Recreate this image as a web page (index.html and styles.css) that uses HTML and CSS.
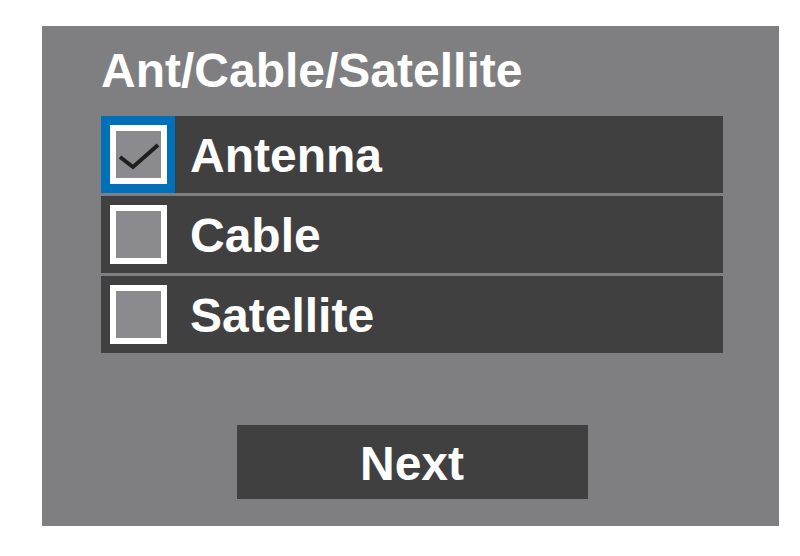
FILE: index.html
```html
<!DOCTYPE html>
<html lang="en">
<head>
  <meta charset="UTF-8">
  <meta name="viewport" content="width=device-width, initial-scale=1.0">
  <title>Ant/Cable/Satellite</title>
  <link rel="stylesheet" href="styles.css">
</head>
<body>
  <div class="setup-panel">
    <h2 class="setup-title">Ant/Cable/Satellite</h2>

    <div class="option-list">
      <div class="option-row">
        <div class="check-cell selected">
          <div class="check-box">
            <svg class="check-mark" width="45" height="47" viewBox="0 0 45 47">
              <path d="M4 26 L17 36 L42 14" fill="none" stroke="#1e1e1e" stroke-width="4"/>
            </svg>
          </div>
        </div>
        <span class="option-label">Antenna</span>
      </div>
      <div class="option-row">
        <div class="check-cell">
          <div class="check-box"></div>
        </div>
        <span class="option-label">Cable</span>
      </div>
      <div class="option-row">
        <div class="check-cell">
          <div class="check-box"></div>
        </div>
        <span class="option-label">Satellite</span>
      </div>
    </div>

    <button type="button" class="next-btn">Next</button>
  </div>
</body>
</html>
```

FILE: styles.css
```css
body {
  margin: 0;
  background: white;
  font-family: "Liberation Sans", Arial, sans-serif;
}
.setup-panel {
  box-sizing: border-box;
  width: 737px;
  height: 500px;
  margin: 26px 0 0 42px;
  padding: 0 56px 0 59px;
  background: #7f7f81;
  display: flex;
  flex-direction: column;
}
.setup-title {
  margin: 17px 0 17px 0;
  height: 56px;
  line-height: 56px;
  font-size: 48px;
  font-weight: bold;
  color: white;
}
.option-list {
  display: flex;
  flex-direction: column;
  gap: 3px;
}
.option-row {
  height: 77px;
  background: #404040;
  display: flex;
  align-items: center;
}
.check-cell {
  box-sizing: border-box;
  width: 74px;
  height: 77px;
  padding: 9px 8px 9px 9px;
}
.check-cell.selected {
  background: #0070b9;
}
.check-box {
  box-sizing: border-box;
  width: 57px;
  height: 59px;
  border: 6px solid white;
  background: #8b8b8f;
}
.check-mark {
  display: block;
}
.option-label {
  margin-left: 15px;
  padding-top: 3px;
  line-height: 56px;
  font-size: 48px;
  font-weight: bold;
  color: white;
}
.next-btn {
  box-sizing: border-box;
  width: 351px;
  height: 74px;
  margin: 72px auto 0 auto;
  padding: 4px 0 0 0;
  line-height: 70px;
  border: none;
  background: #404040;
  color: white;
  font-family: "Liberation Sans", Arial, sans-serif;
  font-size: 48px;
  font-weight: bold;
}
```
